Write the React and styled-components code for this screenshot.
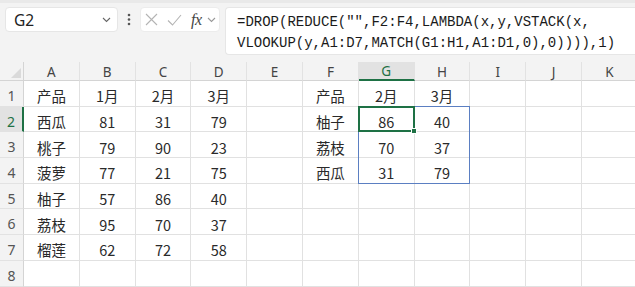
import React from "react";
import styled, { createGlobalStyle } from "styled-components";

const GlobalStyle = createGlobalStyle`
  body {
    margin: 0;
    background: #f3f3f3;
    font-family: "Noto Sans", "Noto Sans CJK SC", sans-serif;
  }
`;

const COLS = ["A", "B", "C", "D", "E", "F", "G", "H", "I", "J", "K"];

const DATA = [
  ["产品", "1月", "2月", "3月", "", "产品", "2月", "3月"],
  ["西瓜", "81", "31", "79", "", "柚子", "86", "40"],
  ["桃子", "79", "90", "23", "", "荔枝", "70", "37"],
  ["菠萝", "77", "21", "75", "", "西瓜", "31", "79"],
  ["柚子", "57", "86", "40"],
  ["荔枝", "95", "70", "37"],
  ["榴莲", "62", "72", "58"],
  [],
];

const FORMULA =
  '=DROP(REDUCE("",F2:F4,LAMBDA(x,y,VSTACK(x,\nVLOOKUP(y,A1:D7,MATCH(G1:H1,A1:D1,0),0)))),1)';

const GREEN = "#1e7145";

const Page = styled.div`
  width: 635px;
  height: 287px;
  overflow: hidden;
  background: #f3f3f3;
  border-top: 3px solid #e9e9e9;
  box-sizing: border-box;
`;

const FormulaBar = styled.div`
  display: flex;
  align-items: flex-start;
  height: 52px;
  padding: 4px 0 0 5px;
  box-sizing: border-box;
`;

const NameBox = styled.div`
  width: 113px;
  height: 25px;
  box-sizing: border-box;
  background: #fff;
  border: 1px solid #e6e6e6;
  border-radius: 4px;
  display: flex;
  align-items: center;
  justify-content: space-between;
  padding: 0 6px 0 8px;
  font-size: 15.5px;
  color: #222;
`;

const Dots = styled.div`
  width: 22px;
  height: 25px;
  display: flex;
  align-items: center;
  justify-content: center;
`;

const IconBox = styled.div`
  width: 80px;
  height: 25px;
  box-sizing: border-box;
  background: #fff;
  border: 1px solid #ececec;
  border-radius: 4px;
  display: flex;
  align-items: center;
  padding-left: 4px;
  gap: 9px;
`;

const Fx = styled.span`
  font-family: "Liberation Serif", serif;
  font-style: italic;
  font-size: 16px;
  color: #444;
  margin-right: -4px;
  letter-spacing: -0.5px;
`;

const FormulaBox = styled.div`
  flex: 1;
  height: 48px;
  margin-left: 5px;
  box-sizing: border-box;
  background: #fff;
  border: 1px solid #e6e6e6;
  border-right: none;
  border-radius: 4px 0 0 4px;
  padding: 4px 0 0 11px;
  font-family: "Liberation Mono", "DejaVu Sans Mono", monospace;
  font-size: 14px;
  line-height: 21px;
  color: #1a1a1a;
  white-space: pre;
`;

const Sheet = styled.div`
  margin-top: 7px;
  display: grid;
  grid-template-columns: 24px repeat(11, 55.8px);
  grid-template-rows: 19px repeat(8, 25.7px);
`;

const Corner = styled.div`
  grid-row: 1;
  grid-column: 1;
  border-right: 1px solid #d4d4d4;
  border-bottom: 1px solid #d4d4d4;
  display: flex;
  align-items: flex-end;
  justify-content: flex-end;
  padding: 0 2px 2px 0;
  &::after {
    content: "";
    width: 0;
    height: 0;
    border-left: 10px solid transparent;
    border-bottom: 10px solid #dadada;
  }
`;

const ColHead = styled.div`
  grid-row: 1;
  grid-column: ${(p) => p.$c};
  box-sizing: border-box;
  background: ${(p) => (p.$active ? "#e2e2e2" : "#f3f3f3")};
  border-right: 1px solid #e2e2e2;
  border-bottom: ${(p) => (p.$active ? `2px solid ${GREEN}` : "1px solid #d4d4d4")};
  display: flex;
  align-items: center;
  justify-content: center;
  padding-top: ${(p) => (p.$active ? "1px" : "2px")};
  font-size: 13.5px;
  color: ${(p) => (p.$active ? GREEN : "#444")};
`;

const RowHead = styled.div`
  grid-row: ${(p) => p.$r};
  grid-column: 1;
  box-sizing: border-box;
  background: ${(p) => (p.$active ? "#e2e2e2" : "#f3f3f3")};
  border-right: ${(p) => (p.$active ? `2px solid ${GREEN}` : "1px solid #d4d4d4")};
  border-bottom: 1px solid #e2e2e2;
  display: flex;
  align-items: center;
  justify-content: center;
  padding-top: 4px;
  font-size: 14px;
  color: ${(p) => (p.$active ? GREEN : "#555")};
`;

const Cell = styled.div`
  grid-row: ${(p) => p.$r};
  grid-column: ${(p) => p.$c};
  box-sizing: border-box;
  background: #fff;
  border-right: 1px solid #e1e1e1;
  border-bottom: 1px solid #e1e1e1;
  display: flex;
  align-items: center;
  justify-content: center;
  padding-top: 5px;
  font-family: "Noto Sans CJK SC", "Noto Sans", sans-serif;
  font-size: 14.5px;
  color: #2a2a2a;
`;

const SpillRange = styled.div`
  grid-row: 3 / 6;
  grid-column: 8 / 10;
  border: 1px solid #5b7fc2;
  margin: -1px 0 0 -1px;
  z-index: 1;
`;

const ActiveCell = styled.div`
  grid-row: 3;
  grid-column: 8;
  border: 2px solid ${GREEN};
  margin: -1px 0 0 -1px;
  position: relative;
  z-index: 2;
  &::after {
    content: "";
    position: absolute;
    right: -4px;
    bottom: -4px;
    width: 4px;
    height: 4px;
    background: ${GREEN};
    border: 1px solid #fff;
  }
`;

function Chevron({ color = "#666" }) {
  return (
    <svg width="9" height="6" viewBox="0 0 9 6">
      <path d="M1 1l3.5 3.5L8 1" fill="none" stroke={color} strokeWidth="1.1" />
    </svg>
  );
}

export default function App() {
  return (
    <>
      <GlobalStyle />
      <Page>
        <FormulaBar>
          <NameBox>
            <span>G2</span>
            <Chevron />
          </NameBox>
          <Dots>
            <svg width="4" height="13" viewBox="0 0 4 13">
              <circle cx="2" cy="2" r="1.3" fill="#555" />
              <circle cx="2" cy="6.5" r="1.3" fill="#555" />
              <circle cx="2" cy="11" r="1.3" fill="#555" />
            </svg>
          </Dots>
          <IconBox>
            <svg width="13" height="13" viewBox="0 0 13 13">
              <path d="M1 1l11 11M12 1L1 12" stroke="#b4b4b4" strokeWidth="1.1" />
            </svg>
            <svg width="15" height="12" viewBox="0 0 15 12">
              <path d="M1 6.5l4.5 4.5L14 1" fill="none" stroke="#b4b4b4" strokeWidth="1.1" />
            </svg>
            <Fx>fx</Fx>
            <Chevron color="#999" />
          </IconBox>
          <FormulaBox>{FORMULA}</FormulaBox>
        </FormulaBar>

        <Sheet>
          <Corner />
          {COLS.map((c, i) => (
            <ColHead key={c} $c={i + 2} $active={c === "G"}>
              {c}
            </ColHead>
          ))}
          {DATA.map((row, r) => (
            <React.Fragment key={r}>
              <RowHead $r={r + 2} $active={r === 1}>
                {r + 1}
              </RowHead>
              {COLS.map((c, ci) => (
                <Cell key={c} $r={r + 2} $c={ci + 2}>
                  {row[ci] || ""}
                </Cell>
              ))}
            </React.Fragment>
          ))}
          <SpillRange />
          <ActiveCell />
        </Sheet>
      </Page>
    </>
  );
}
